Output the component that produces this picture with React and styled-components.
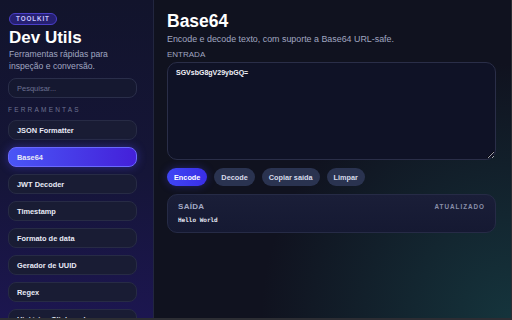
import React, { useState } from 'react';
import styled, { createGlobalStyle } from 'styled-components';

const GlobalStyle = createGlobalStyle`
  html, body {
    margin: 0;
    padding: 0;
    background: #2c2d33;
  }
  body {
    font-family: 'Liberation Sans', Arial, sans-serif;
  }
  * { box-sizing: border-box; }
`;

const Shell = styled.div`
  width: 511px;
  height: 318px;
  display: flex;
  overflow: hidden;
  background: #10121f;
`;

const Sidebar = styled.aside`
  width: 154px;
  flex-shrink: 0;
  height: 100%;
  overflow-y: scroll;
  padding: 13px 9px 14px 8px;
  background: linear-gradient(180deg, #12142c 0%, #151538 55%, #1c1650 100%);
  border-right: 1px solid #22263f;

  &::-webkit-scrollbar { width: 6px; }
  &::-webkit-scrollbar-track { background: #171a38; }
  &::-webkit-scrollbar-thumb { background: #2b3b7c; border-radius: 3px; }
`;

const Badge = styled.div`
  width: max-content;
  height: 12px;
  line-height: 10px;
  padding: 0 6px;
  border-radius: 7px;
  border: 1px solid #4a3fc8;
  background: #262072;
  color: #c9c6ff;
  font-size: 6.3px;
  font-weight: 700;
  letter-spacing: 0.9px;
  margin-left: 1px;
`;

const AppTitle = styled.h1`
  margin: 3px 0 0 1px;
  font-size: 17px;
  font-weight: 700;
  color: #ffffff;
  line-height: 20px;
`;

const Lead = styled.p`
  margin: 0 0 0 1px;
  font-size: 8.6px;
  line-height: 12px;
  color: #a0a6c0;
`;

const Search = styled.input`
  display: block;
  width: 129px;
  height: 20px;
  margin-top: 6px;
  padding: 0 8px;
  border-radius: 8px;
  border: 1px solid #2a2e4a;
  background: #151830;
  color: #d0d4ea;
  font-family: inherit;
  font-size: 7.5px;
  outline: none;

  &::placeholder { color: #6b7090; }
`;

const Section = styled.div`
  margin-top: 8px;
  line-height: 8px;
  font-size: 6.5px;
  letter-spacing: 2.2px;
  color: #6d7290;
`;

const ToolList = styled.nav`
  display: flex;
  flex-direction: column;
  gap: 7px;
  margin-top: 6px;
  width: 129px;
`;

const ToolItem = styled.button`
  height: 20px;
  text-align: left;
  padding: 0 8px;
  border-radius: 8px;
  font-family: inherit;
  font-size: 7.4px;
  font-weight: 700;
  color: #e8eaf6;
  cursor: pointer;
  border: 1px solid ${p => (p.$active ? '#6a68ff' : '#272b45')};
  background: ${p => (p.$active ? 'linear-gradient(90deg, #4a56f6 0%, #4420d9 100%)' : '#191c34')};
  box-shadow: ${p => (p.$active ? '0 0 10px rgba(80, 70, 240, 0.45)' : 'none')};
`;

const Main = styled.main`
  flex: 1;
  height: 100%;
  padding: 11px 15px 0 13px;
  background: radial-gradient(ellipse 70% 80% at 100% 100%, #15343c 0%, rgba(16, 18, 31, 0) 100%), #10121f;
`;

const PageTitle = styled.h2`
  margin: 0;
  font-size: 17.5px;
  font-weight: 700;
  color: #ffffff;
  line-height: 20px;
`;

const PageLead = styled.p`
  margin: 3px 0 0;
  font-size: 8.9px;
  line-height: 11px;
  color: #a0a6c0;
`;

const Label = styled.div`
  margin-top: 5px;
  font-size: 8px;
  line-height: 10px;
  color: #a0a6c0;
`;

const Input = styled.textarea`
  display: block;
  width: 329px;
  height: 98px;
  margin-top: 2px;
  padding: 6px 8px;
  border-radius: 10px;
  border: 1px solid #2a2e48;
  background: #0f1226;
  color: #f2f3fa;
  font-family: inherit;
  font-size: 7px;
  font-weight: 700;
  resize: vertical;
  outline: none;
`;

const Actions = styled.div`
  display: flex;
  gap: 7px;
  margin-top: 8px;
`;

const Action = styled.button`
  height: 18px;
  padding: 0 7px;
  border-radius: 9px;
  border: none;
  font-family: inherit;
  font-size: 7.3px;
  font-weight: 700;
  color: ${p => (p.$primary ? '#ffffff' : '#d6daea')};
  background: ${p => (p.$primary ? 'linear-gradient(90deg, #3f46f5 0%, #3a2ee6 100%)' : '#2a3350')};
  box-shadow: ${p => (p.$primary ? '0 0 8px rgba(70, 70, 240, 0.35)' : 'none')};
  cursor: pointer;
`;

const Output = styled.section`
  width: 329px;
  height: 39px;
  margin-top: 8px;
  padding: 7px 10px 0;
  border-radius: 10px;
  border: 1px solid #262b46;
  background: linear-gradient(180deg, #1a1e38 0%, #151932 100%);
`;

const OutputHead = styled.div`
  display: flex;
  justify-content: space-between;
  align-items: center;
  line-height: 10px;
`;

const OutputTitle = styled.span`
  font-size: 8px;
  font-weight: 700;
  color: #a3a9c4;
  letter-spacing: 0.3px;
`;

const Status = styled.span`
  font-size: 6.3px;
  font-weight: 700;
  color: #8a90aa;
  letter-spacing: 1px;
`;

const OutputText = styled.pre`
  margin: 4px 0 0;
  line-height: 8px;
  font-family: 'DejaVu Sans Mono', 'Liberation Mono', monospace;
  font-size: 6px;
  font-weight: 700;
  color: #e4e6f2;
`;

const tools = [
  'JSON Formatter',
  'Base64',
  'JWT Decoder',
  'Timestamp',
  'Formato de data',
  'Gerador de UUID',
  'Regex',
  'Histórico Clipboard',
  'Hash',
  'URL Encode',
  'Cores',
  'Lorem Ipsum',
  'Diff de texto',
];

export default function App() {
  const [active, setActive] = useState('Base64');
  const [input, setInput] = useState('SGVsbG8gV29ybGQ=');

  return (
    <>
      <GlobalStyle />
      <Shell>
        <Sidebar>
          <Badge>TOOLKIT</Badge>
          <AppTitle>Dev Utils</AppTitle>
          <Lead>
            Ferramentas rápidas para
            <br />
            inspeção e conversão.
          </Lead>
          <Search placeholder="Pesquisar..." />
          <Section>FERRAMENTAS</Section>
          <ToolList>
            {tools.map(t => (
              <ToolItem key={t} $active={t === active} onClick={() => setActive(t)}>
                {t}
              </ToolItem>
            ))}
          </ToolList>
        </Sidebar>
        <Main>
          <PageTitle>Base64</PageTitle>
          <PageLead>Encode e decode texto, com suporte a Base64 URL-safe.</PageLead>
          <Label>ENTRADA</Label>
          <Input value={input} onChange={e => setInput(e.target.value)} />
          <Actions>
            <Action $primary>Encode</Action>
            <Action>Decode</Action>
            <Action>Copiar saída</Action>
            <Action>Limpar</Action>
          </Actions>
          <Output>
            <OutputHead>
              <OutputTitle>SAÍDA</OutputTitle>
              <Status>ATUALIZADO</Status>
            </OutputHead>
            <OutputText>Hello World</OutputText>
          </Output>
        </Main>
      </Shell>
    </>
  );
}
